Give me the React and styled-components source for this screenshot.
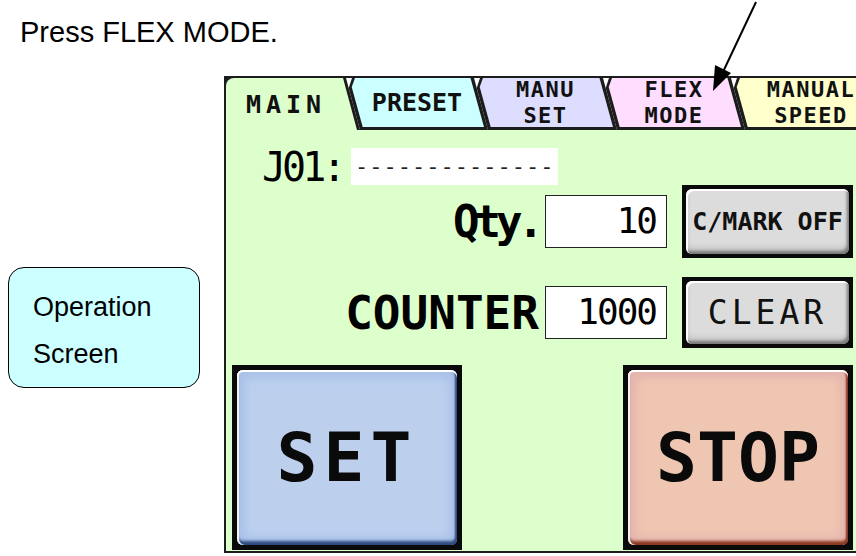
import React from 'react';
import styled, { createGlobalStyle, css } from 'styled-components';

const SLANT = 14;
const HMI_FONT = `'DejaVu Sans Mono', 'Liberation Mono', monospace`;

const tabs = [
  { id: 'main', lines: ['MAIN'], width: 134, bg: '#ddffcc', first: true },
  { id: 'preset', lines: ['PRESET'], width: 142, bg: '#ccffff' },
  { id: 'manu', lines: ['MANU', 'SET'], width: 143, bg: '#ddddff' },
  { id: 'flex', lines: ['FLEX', 'MODE'], width: 142, bg: '#ffddff' },
  { id: 'speed', lines: ['MANUAL', 'SPEED'], width: 160, bg: '#ffffcc' },
];

const Global = createGlobalStyle`
  html, body {
    margin: 0;
    background: #fff;
    overflow: hidden;
  }
  * {
    box-sizing: border-box;
  }
`;

export default function App() {
  return (
    <Page>
      <Global />
      <Instruction>Press FLEX MODE.</Instruction>
      <Stage>
        <Callout>
          Operation
          <br />
          Screen
        </Callout>
        <Panel>
          <TabBar>
            {tabs.map(t => (
              <Tab key={t.id} $w={t.width} $first={t.first}>
                <TabFace $bg={t.bg} $first={t.first} $double={t.lines.length > 1}>
                  {t.lines.map(l => (
                    <span key={l}>{l}</span>
                  ))}
                </TabFace>
              </Tab>
            ))}
          </TabBar>
          <Body>
            <JobRow>
              <JobLabel>J01:</JobLabel>
              <JobField>--------------</JobField>
            </JobRow>
            <FieldRow $h={73}>
              <FieldLabel $size={44} $spacing={-5}>Qty.</FieldLabel>
              <ValueBox>10</ValueBox>
              <KeyButton $h={73}>
                <KeyFace $size={25} $spacing={0} $bold>C/MARK OFF</KeyFace>
              </KeyButton>
            </FieldRow>
            <FieldRow $h={71} $gap={19}>
              <FieldLabel $size={46} $spacing={0}>COUNTER</FieldLabel>
              <ValueBox>1000</ValueBox>
              <KeyButton $h={71}>
                <KeyFace $size={33} $spacing={4}>CLEAR</KeyFace>
              </KeyButton>
            </FieldRow>
            <ActionRow>
              <BigButton>
                <BigFace $tone="blue">SET</BigFace>
              </BigButton>
              <BigButton>
                <BigFace $tone="red">STOP</BigFace>
              </BigButton>
            </ActionRow>
          </Body>
        </Panel>
      </Stage>
      <Pointer width="856" height="100" viewBox="0 0 856 100">
        <line x1="756" y1="2" x2="722" y2="74" stroke="#000" strokeWidth="2" />
        <polygon points="713,91 731,73 715,65" fill="#000" />
      </Pointer>
    </Page>
  );
}

const Page = styled.div`
  position: relative;
  width: 856px;
  height: 556px;
  overflow: hidden;
  font-family: 'Liberation Sans', Arial, sans-serif;
  color: #000;
`;

const Instruction = styled.div`
  margin: 16px 0 0 20px;
  font-size: 29px;
  line-height: 32px;
`;

const Stage = styled.div`
  display: flex;
  align-items: flex-start;
  margin-top: 28px;
`;

const Callout = styled.div`
  flex: none;
  width: 192px;
  height: 121px;
  margin: 191px 0 0 8px;
  padding: 16px 0 0 24px;
  border: 1.5px solid #000;
  border-radius: 16px;
  background: #ccffff;
  font-size: 27px;
  line-height: 47px;
`;

const Panel = styled.div`
  flex: none;
  width: 640px;
  height: 477px;
  margin-left: 24px;
  border: 2px solid #1c1c1c;
  background: #ddffcc;
  display: flex;
  flex-direction: column;
  overflow: hidden;
`;

const TabBar = styled.div`
  display: flex;
  height: 52px;
  background: #fff;
  flex: none;
`;

const Tab = styled.div`
  flex: none;
  display: flex;
  width: ${p => p.$w}px;
  margin-left: ${p => (p.$first ? 0 : -SLANT)}px;
  background: #1c1c1c;
  clip-path: ${p =>
    p.$first
      ? `polygon(0 0, calc(100% - ${SLANT}px) 0, 100% 100%, 0 100%)`
      : `polygon(6px 0, calc(100% - ${SLANT}px) 0, 100% 100%, ${SLANT}px 100%, 2.7px 10px)`};
`;

const TabFace = styled.div`
  flex: 1;
  display: flex;
  flex-direction: column;
  align-items: center;
  justify-content: center;
  background: ${p => p.$bg};
  font-family: ${HMI_FONT};
  font-weight: bold;
  color: #111;
  ${p =>
    p.$first
      ? css`
          border-top-left-radius: 8px;
          padding-right: ${SLANT}px;
          letter-spacing: 5px;
          font-size: 25px;
          clip-path: polygon(0 0, calc(100% - 17px) 0, calc(100% - 3px) 100%, 0 100%);
        `
      : css`
          margin-bottom: 3px;
          font-size: ${p.$double ? 22 : 25}px;
          line-height: ${p.$double ? 26 : 30}px;
          letter-spacing: ${p.$double ? 1.5 : 0}px;
          clip-path: polygon(9px 0, calc(100% - 17.5px) 0, calc(100% - 4px) 100%, 16.7px 100%, 5.7px 9px);
        `}
`;

const Body = styled.div`
  flex: 1;
  display: flex;
  flex-direction: column;
  padding: 18px 9px 0 6px;
`;

const JobRow = styled.div`
  display: flex;
  align-items: center;
  height: 37px;
  padding-left: 30px;
`;

const JobLabel = styled.span`
  font-family: ${HMI_FONT};
  font-size: 40px;
  letter-spacing: -4px;
  width: 89px;
`;

const JobField = styled.span`
  width: 207px;
  height: 37px;
  background: #fff;
  font-family: ${HMI_FONT};
  font-size: 22px;
  line-height: 37px;
  padding-left: 4px;
  color: #222;
  letter-spacing: 1px;
`;

const FieldRow = styled.div`
  display: flex;
  align-items: center;
  justify-content: flex-end;
  height: ${p => p.$h}px;
  margin-top: ${p => p.$gap || 0}px;
`;

const FieldLabel = styled.span`
  font-family: ${HMI_FONT};
  font-weight: bold;
  font-size: ${p => p.$size}px;
  letter-spacing: ${p => p.$spacing}px;
  margin-right: 6px;
`;

const ValueBox = styled.div`
  width: 122px;
  height: 53px;
  background: #fff;
  border: 1.5px solid #222;
  font-family: ${HMI_FONT};
  font-size: 36px;
  letter-spacing: -2px;
  line-height: 50px;
  text-align: right;
  padding-right: 10px;
`;

const KeyButton = styled.div`
  width: 171px;
  height: ${p => p.$h}px;
  margin-left: 15px;
  background: #0a0a0a;
  padding: 4px;
  display: flex;
`;

const KeyFace = styled.span`
  flex: 1;
  display: flex;
  align-items: center;
  justify-content: center;
  border-radius: 6px;
  background: #dcdcdc;
  box-shadow: inset 2px 2px 0 #fff, inset -2px -3px 3px #7a7a7a, inset 0 -6px 6px rgba(0, 0, 0, 0.12);
  font-family: ${HMI_FONT};
  font-weight: ${p => (p.$bold ? 'bold' : 'normal')};
  font-size: ${p => p.$size}px;
  letter-spacing: ${p => p.$spacing}px;
  color: #111;
`;

const ActionRow = styled.div`
  display: flex;
  justify-content: space-between;
  margin-top: 17px;
`;

const BigButton = styled.div`
  width: 230px;
  height: 185px;
  background: #0a0a0a;
  padding: 5px;
  display: flex;
`;

const tones = {
  blue: { face: '#bcd0ee', rim: '#a9c0e8', shade: '#2e4a80' },
  red: { face: '#efc6b2', rim: '#e4b4ae', shade: '#8a3a22' },
};

const BigFace = styled.span`
  flex: 1;
  display: flex;
  align-items: center;
  justify-content: center;
  border-radius: 6px;
  background: ${p => tones[p.$tone].face};
  box-shadow: inset 0 2px 0 #fff, inset 2px 0 0 #f4f4f4, inset 0 -4px 3px ${p => tones[p.$tone].shade},
    inset -2px 0 2px ${p => tones[p.$tone].shade}, inset 0 0 8px 8px ${p => tones[p.$tone].rim};
  font-family: ${HMI_FONT};
  font-weight: bold;
  font-size: 68px;
  letter-spacing: ${p => (p.$tone === 'blue' ? 6 : 0)}px;
  color: #0a0a0a;
`;

const Pointer = styled.svg`
  position: absolute;
  left: 0;
  top: 0;
  pointer-events: none;
`;
